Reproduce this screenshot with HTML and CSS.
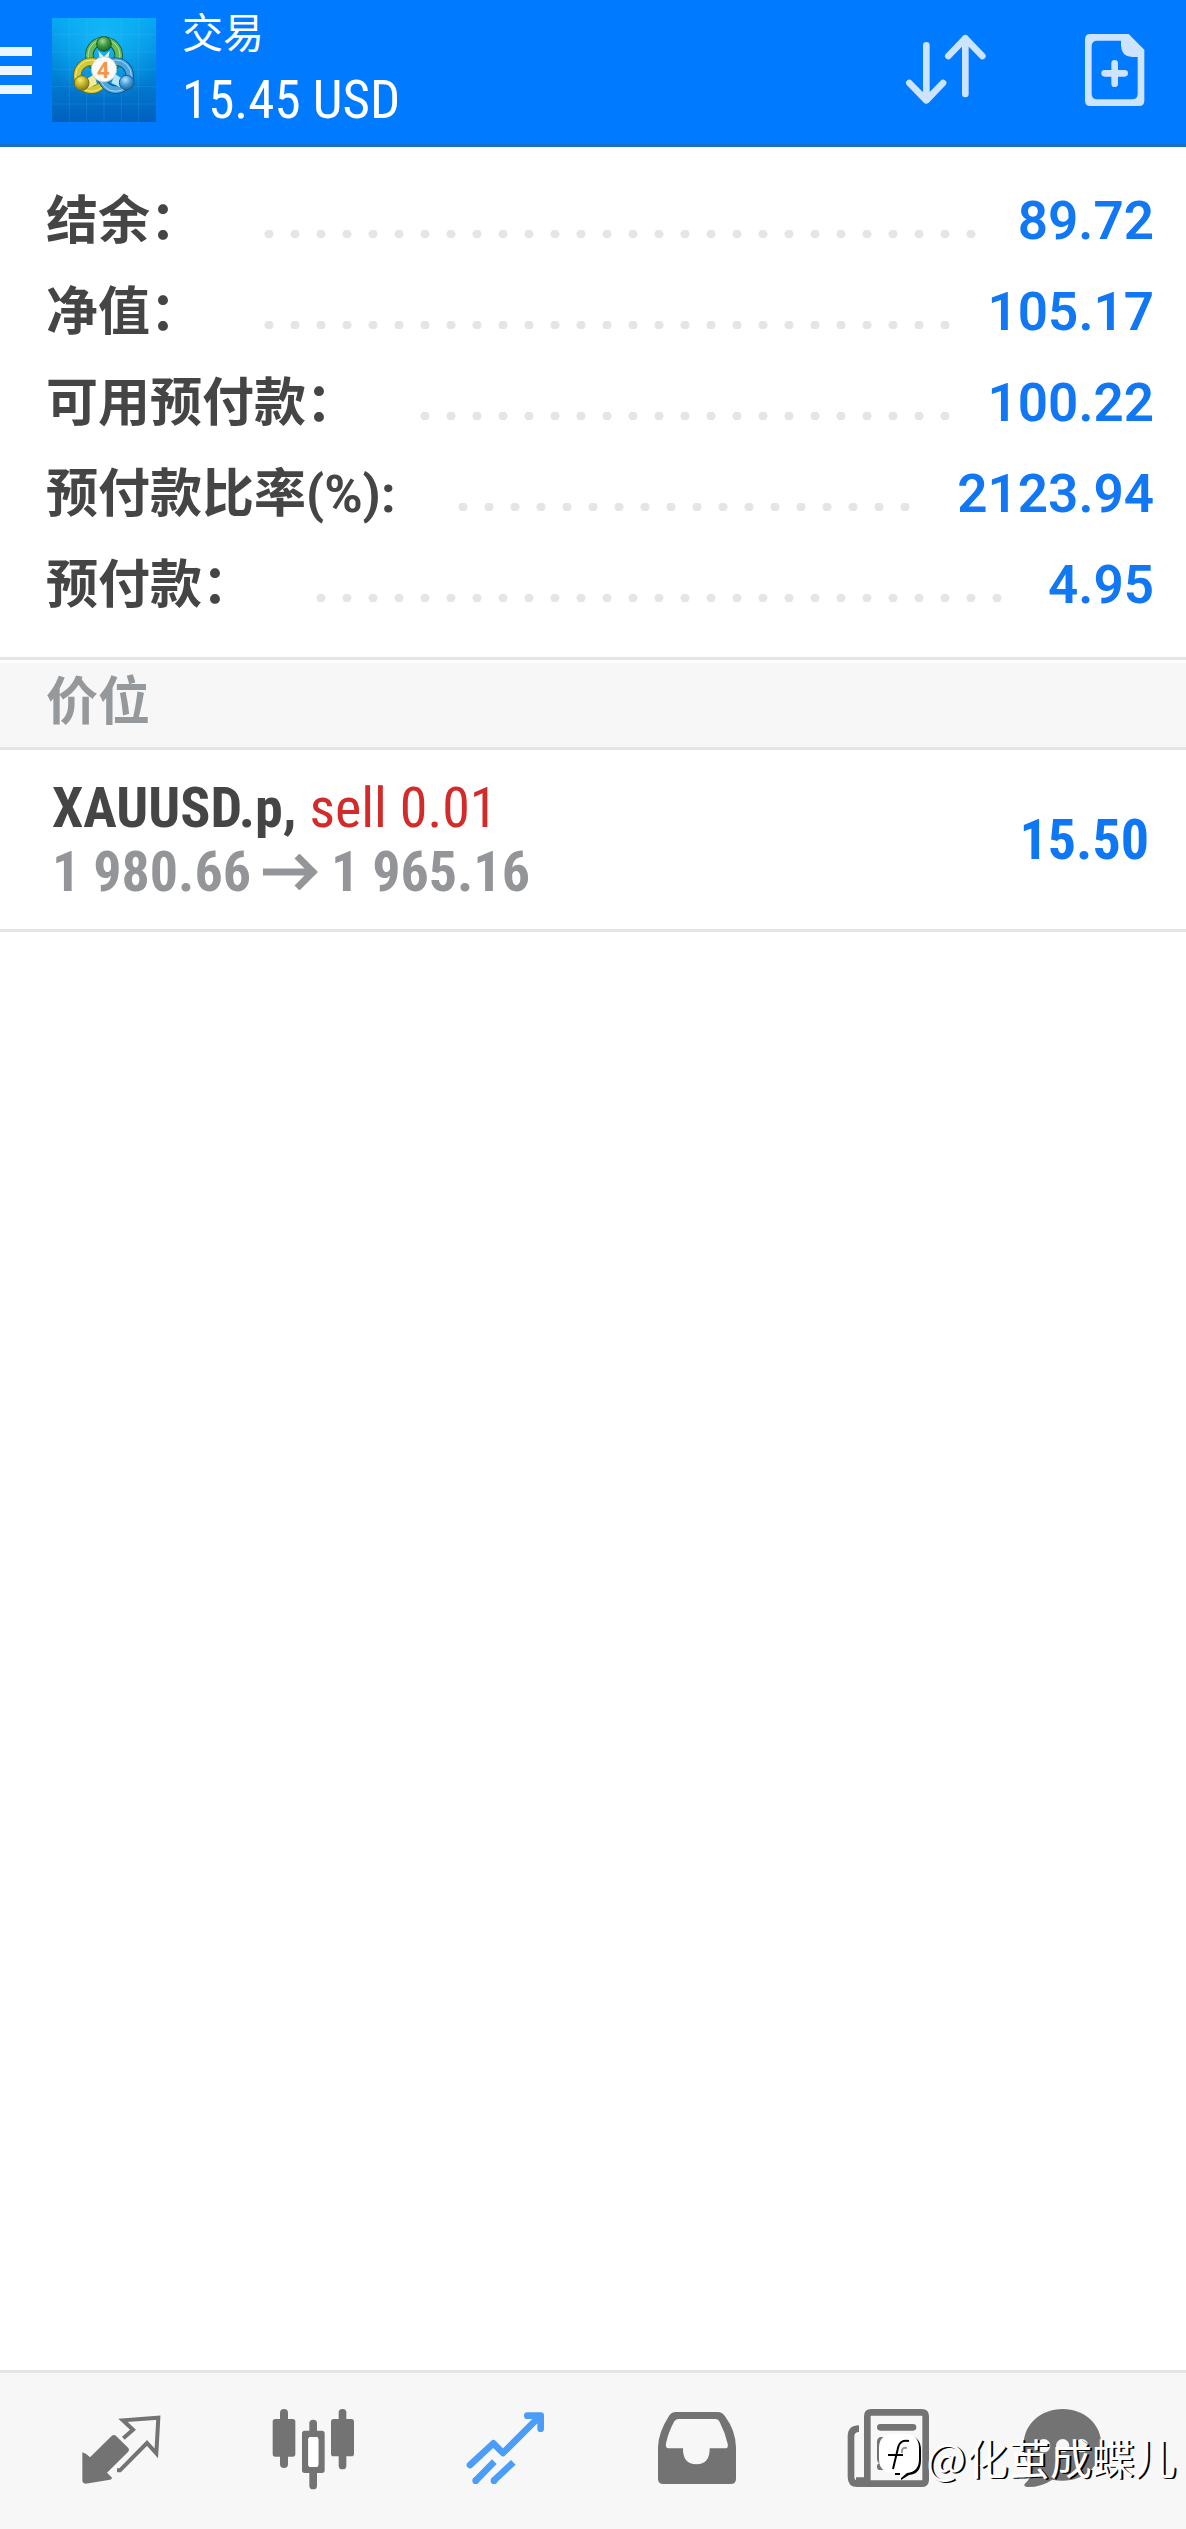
FILE: index.html
```
<!DOCTYPE html>
<html lang="zh-CN">
<head>
<meta charset="utf-8">
<meta name="viewport" content="width=device-width, initial-scale=1">
<title>交易</title>
<link rel="stylesheet" href="styles.css">
</head>
<body>
<header class="topbar">
  <button class="menu" type="button" aria-label="菜单"><span class="menu-bar"></span><span class="menu-bar"></span><span class="menu-bar"></span></button>
  <svg class="logo" viewBox="36 23 312 312" aria-hidden="true">
    <defs>
      <linearGradient id="sky" x1="0" y1="0" x2="0" y2="1"><stop offset="0" stop-color="#06a5f3"/><stop offset=".5" stop-color="#0083d6"/><stop offset="1" stop-color="#0060bd"/></linearGradient>
      <radialGradient id="glow" cx=".5" cy=".2" r=".6"><stop offset="0" stop-color="#18c0fa" stop-opacity=".8"/><stop offset="1" stop-color="#18c0fa" stop-opacity="0"/></radialGradient>
      <radialGradient id="green" cx=".4" cy=".3" r=".7"><stop offset="0" stop-color="#a4dd92"/><stop offset=".5" stop-color="#3d9a46"/><stop offset="1" stop-color="#176628"/></radialGradient>
      <radialGradient id="yellow" cx=".4" cy=".3" r=".7"><stop offset="0" stop-color="#f7ee70"/><stop offset=".5" stop-color="#c4b62a"/><stop offset="1" stop-color="#817a17"/></radialGradient>
      <radialGradient id="blue" cx=".4" cy=".3" r=".7"><stop offset="0" stop-color="#b5e6ff"/><stop offset=".5" stop-color="#4a9fd8"/><stop offset="1" stop-color="#1b639f"/></radialGradient>
    </defs>
    <rect x="36" y="23" width="312" height="312" fill="url(#sky)"/>
    <rect x="36" y="23" width="312" height="312" fill="url(#glow)"/>
    <path d="M88 23V335M140 23V335M192 23V335M244 23V335M296 23V335M36 73H348M36 125H348M36 177H348M36 229H348M36 281H348" stroke="#6cc7f5" stroke-width="1.5" opacity=".3"/>
    <g fill="none">
      <circle cx="192" cy="135" r="44" stroke="#14592c" stroke-width="25"/>
      <circle cx="192" cy="135" r="44" stroke="#67b85b" stroke-width="20"/>
      <circle cx="192" cy="135" r="48" stroke="#b3e39b" stroke-width="3"/>
      <circle cx="154" cy="196" r="42" stroke="#6d6918" stroke-width="25"/>
      <circle cx="154" cy="196" r="42" stroke="#d2c936" stroke-width="20"/>
      <circle cx="154" cy="196" r="47" stroke="#f7ee8b" stroke-width="3"/>
      <circle cx="227" cy="196" r="42" stroke="#115188" stroke-width="25"/>
      <circle cx="227" cy="196" r="42" stroke="#4ba5dd" stroke-width="20"/>
      <circle cx="227" cy="196" r="47" stroke="#a3dcff" stroke-width="3"/>
    </g>
    <path d="M175 122L192 139L209 122L204 150H180Z" fill="#e1f3d5"/>
    <path d="M139 207L163 192L171 221L145 233Z" fill="#f3eb9c"/>
    <path d="M247 205L225 191L214 218L241 231Z" fill="#b9e4ff"/>
    <circle cx="192" cy="101" r="22" fill="url(#green)" stroke="#17602b" stroke-width="3"/>
    <circle cx="125" cy="218" r="22" fill="url(#yellow)" stroke="#77711b" stroke-width="3"/>
    <circle cx="260" cy="217" r="22" fill="url(#blue)" stroke="#195b91" stroke-width="3"/>
    <circle cx="192" cy="177" r="38" fill="#fafafa" stroke="#b8c1bd" stroke-width="2"/>
    <text class="logo-mark" x="190" y="202" text-anchor="middle">4</text>
  </svg>
  <div class="heading">
    <h1 class="title">交易</h1>
    <p class="profit">15.45 USD</p>
  </div>
  <div class="actions">
    <button class="icon-button" type="button" aria-label="排序">
      <svg class="icon" viewBox="114 63 288 288" fill="none" stroke="currentColor" stroke-width="20" stroke-linecap="round" stroke-linejoin="round"><path d="M199 133V298M148 246L199 298L249 246M316 279V112M265 165L316 112L367 165"/></svg>
    </button>
    <button class="icon-button" type="button" aria-label="新订单">
      <svg class="icon" viewBox="621 63 288 288"><path fill="currentColor" fill-rule="evenodd" d="M691 99H806L853 146V299Q853 315 837 315H691Q675 315 675 299V115Q675 99 691 99ZM712 119Q695 119 695 136V278Q695 295 712 295H816Q833 295 833 278V168H816Q784 166 783 134V119Z"/><path d="M764 187V248M734 217H794" fill="none" stroke="currentColor" stroke-width="20" stroke-linecap="round"/></svg>
    </button>
  </div>
</header>
<main class="content">
  <dl class="summary">
    <div class="line"><dt class="label">结余：</dt><dd class="value">89.72</dd></div>
    <div class="line"><dt class="label">净值：</dt><dd class="value">105.17</dd></div>
    <div class="line"><dt class="label">可用预付款：</dt><dd class="value">100.22</dd></div>
    <div class="line"><dt class="label">预付款比率(%):</dt><dd class="value">2123.94</dd></div>
    <div class="line"><dt class="label">预付款：</dt><dd class="value">4.95</dd></div>
  </dl>
  <h2 class="section">价位</h2>
  <article class="position">
    <div class="details">
      <p class="symbol">XAUUSD.p, <span class="sell">sell 0.01</span></p>
      <p class="prices"><span>1 980.66</span><svg class="arrow" viewBox="0 0 56 36" role="img" aria-label="至"><path d="M0 18H50M34 2L50 18L34 34" fill="none" stroke="currentColor" stroke-width="7"/></svg><span>1 965.16</span></p>
    </div>
    <p class="gain">15.50</p>
  </article>
</main>
<nav class="tabs">
  <a class="tab" href="#quotes" aria-label="行情"><svg class="icon" viewBox="99 129 288 288"><path fill="currentColor" d="M127 277Q139 280 150 292L215 228Q222 222 229 229L265 264Q270 270 264 276L201 338L216 353Q216 357 210 359L137 371Q127 371 127 361Z"/><path d="M250 235L279 209L249 181L355 173L349 280L321 249L240 331H231" fill="none" stroke="currentColor" stroke-width="12"/></svg></a>
  <a class="tab" href="#charts" aria-label="图表"><svg class="icon" viewBox="672 129 288 288" fill="currentColor"><rect x="717" y="147" width="24" height="177" rx="12"/><rect x="695" y="177" width="68" height="113" rx="8"/><rect x="893" y="147" width="23" height="181" rx="11"/><rect x="870" y="177" width="69" height="112" rx="8"/><rect x="805" y="179" width="23" height="50" rx="11"/><rect x="805" y="325" width="23" height="63" rx="11"/><path fill-rule="evenodd" d="M791 212H843Q851 212 851 220V331Q851 339 843 339H791Q783 339 783 331V220Q783 212 791 212ZM809 231Q802 231 802 238V313Q802 321 809 321H825Q832 321 832 313V238Q832 231 825 231Z"/><rect class="candle-gap" x="802" y="231" width="30" height="90" rx="7"/></svg></a>
  <a class="tab tab-active" href="#trade" aria-label="交易" aria-current="page"><svg class="icon" viewBox="108 129 288 288" fill="none" stroke="currentColor" stroke-width="20" stroke-linejoin="round"><path stroke-linecap="round" d="M147 315L217 250L246 279L358 167M319 167H359V206"/><path d="M220 305L165 361M277 307L219 361"/><circle cx="164" cy="362" r="10" fill="currentColor" stroke="none"/><circle cx="219" cy="362" r="10" fill="currentColor" stroke="none"/></svg></a>
  <a class="tab" href="#history" aria-label="历史"><svg class="icon" viewBox="687 129 288 288"><path fill="currentColor" fill-rule="evenodd" d="M768 156H893Q907 156 915 169Q947 212 948 262V356Q948 372 932 372H730Q714 372 714 356V262Q715 217 747 168Q754 156 768 156ZM776 177Q768 177 763 184Q746 214 738 250Q735 265 746 265H789Q788 313 829 313Q870 313 869 265H915Q926 265 923 251Q915 217 899 186Q895 177 886 177Z"/></svg></a>
  <a class="tab" href="#news" aria-label="新闻"><svg class="icon" viewBox="66 129 288 288" fill="none" stroke="currentColor" stroke-width="20"><path d="M120 206Q96 206 96 230V350Q96 371 115 371H308Q320 371 320 359V169Q320 157 308 157H157Q145 157 145 169V371M111 362H145"/><path d="M184 202H282M251 241H282" stroke-linecap="round"/><rect x="184" y="241" width="30" height="60" rx="3"/><path d="M251 272H282M184 320H282" stroke-linecap="round"/></svg></a>
  <a class="tab" href="#chat" aria-label="消息"><svg class="icon" viewBox="582 129 288 288"><path fill="currentColor" fill-rule="evenodd" d="M728 147C792 147 844 192 844 254C844 318 792 362 728 362Q711 362 697 359Q663 382 621 381Q610 379 614 372Q635 352 638 334Q611 303 611 254C611 192 664 147 728 147ZM671 237A20 20 0 1 0 671 277A20 20 0 1 0 671 237ZM728 237A20 20 0 1 0 728 277A20 20 0 1 0 728 237ZM785 237A20 20 0 1 0 785 277A20 20 0 1 0 785 237Z"/></svg></a>
  <p class="signature"><svg class="signature-mark" viewBox="0 0 44 48" aria-hidden="true"><path d="M15 3H30Q42 4 42 17V27Q42 41 30 42L22 47V42H16Z" fill="#000"/><path d="M13 1H27Q40 2 40 15V26Q40 39 28 40L21 46V40H13Q0 39 0 26V15Q0 2 13 1Z" fill="#fff"/><path d="M30 8Q21 6 19 15L14 36M9 22H24" fill="none" stroke="#000" stroke-width="2"/><path d="M28 15Q22 14 23 20" fill="none" stroke="#999" stroke-width="2"/></svg>@化茧成蝶儿</p>
</nav>
</body>
</html>
```
FILE: styles.css
```
* {
  box-sizing: border-box;
}

body {
  display: flex;
  flex-direction: column;
  min-height: 100vh;
  margin: 0;
  background: #fff;
  color: #454545;
  font-family: "Roboto Condensed", "Noto Sans CJK SC", sans-serif;
}

h1, h2, p, dl, dd {
  margin: 0;
}

button {
  padding: 0;
  border: 0;
  background: none;
  color: inherit;
}

.topbar {
  display: flex;
  align-items: center;
  padding: 0 23px 4px 0;
  height: 147px;
  border-bottom: 3px solid #1b6fc9;
  background: #007aff;
  color: #fff;
}

.menu {
  display: flex;
  flex-direction: column;
  gap: 10px;
  width: 32px;
  margin-right: 20px;
}

.menu-bar {
  height: 9px;
  background: #edf6ff;
}

.logo {
  width: 104px;
  height: 104px;
  margin-right: 26px;
}

.logo-mark {
  fill: #f2964a;
  font: 700 68px Roboto, sans-serif;
}

.heading {
  flex: 1;
  padding-bottom: 6px;
}

.title {
  font-size: 41px;
  font-weight: 400;
  line-height: 66px;
}

.profit {
  font-size: 53px;
  line-height: 66px;
}

.actions {
  display: flex;
  gap: 73px;
  color: #cce4ff;
}

.icon-button {
  display: flex;
}

.icon {
  display: block;
  width: 96px;
  height: 96px;
}

.content {
  flex: 1;
}

.summary {
  padding: 29px 32px 26px 46px;
  border-bottom: 3px solid #e5e5e5;
}

.line {
  display: flex;
  align-items: center;
  line-height: 91px;
}

.label {
  font-family: Roboto, "Noto Sans CJK SC", sans-serif;
  font-size: 52px;
  font-weight: 700;
}

/* dotted leader: only whole 26px steps are drawn */
.line::after {
  content: "";
  order: 1;
  flex: 1;
  height: 8px;
  margin: 24px 20px 0 54px;
  background: radial-gradient(circle, #e5e5e5 4px, transparent 5px) 0 0 / 26px 8px repeat-x;
  mask: linear-gradient(#000, #000) 0 0 / round(down, 100%, 26px) 100% no-repeat;
}

.value {
  order: 2;
  color: #1277f2;
  font-family: Roboto, sans-serif;
  font-size: 53px;
  font-weight: 600;
}

.section {
  padding: 0 46px 4px;
  border-top: 3px solid #fff;
  border-bottom: 3px solid #e5e5e5;
  background: #f7f7f7;
  color: #96999c;
  font-size: 52px;
  line-height: 80px;
}

.position {
  display: flex;
  align-items: center;
  justify-content: space-between;
  padding: 26px 37px 25px 52px;
  border-bottom: 3px solid #e5e5e5;
  font-size: 56px;
  font-weight: 700;
  line-height: 64px;
}

.sell {
  color: #d32a2a;
  font-weight: 400;
}

.prices {
  display: flex;
  align-items: center;
  gap: 12px;
  color: #949599;
}

.arrow {
  width: 56px;
  height: 36px;
}

.gain {
  color: #0f77f3;
}

.tabs {
  position: relative;
  display: grid;
  grid-template-columns: repeat(5, 192fr) 154fr;
  align-items: center;
  justify-items: center;
  padding: 30px 47px 30px 25px;
  border-top: 3px solid #e5e5e5;
  background: #f7f7f7;
}

.tab {
  color: #737373;
}

.tab-active {
  color: #4b9df8;
}

.candle-gap {
  fill: #fff;
}

.signature {
  position: absolute;
  right: 10px;
  bottom: 42px;
  display: flex;
  align-items: center;
  gap: 3px;
  color: #fff;
  font-family: "Noto Sans CJK SC", sans-serif;
  font-size: 42px;
  font-weight: 400;
  line-height: 60px;
  text-shadow: 2px 1px 0 #000;
}

.signature-mark {
  width: 44px;
  height: 48px;
}
```
